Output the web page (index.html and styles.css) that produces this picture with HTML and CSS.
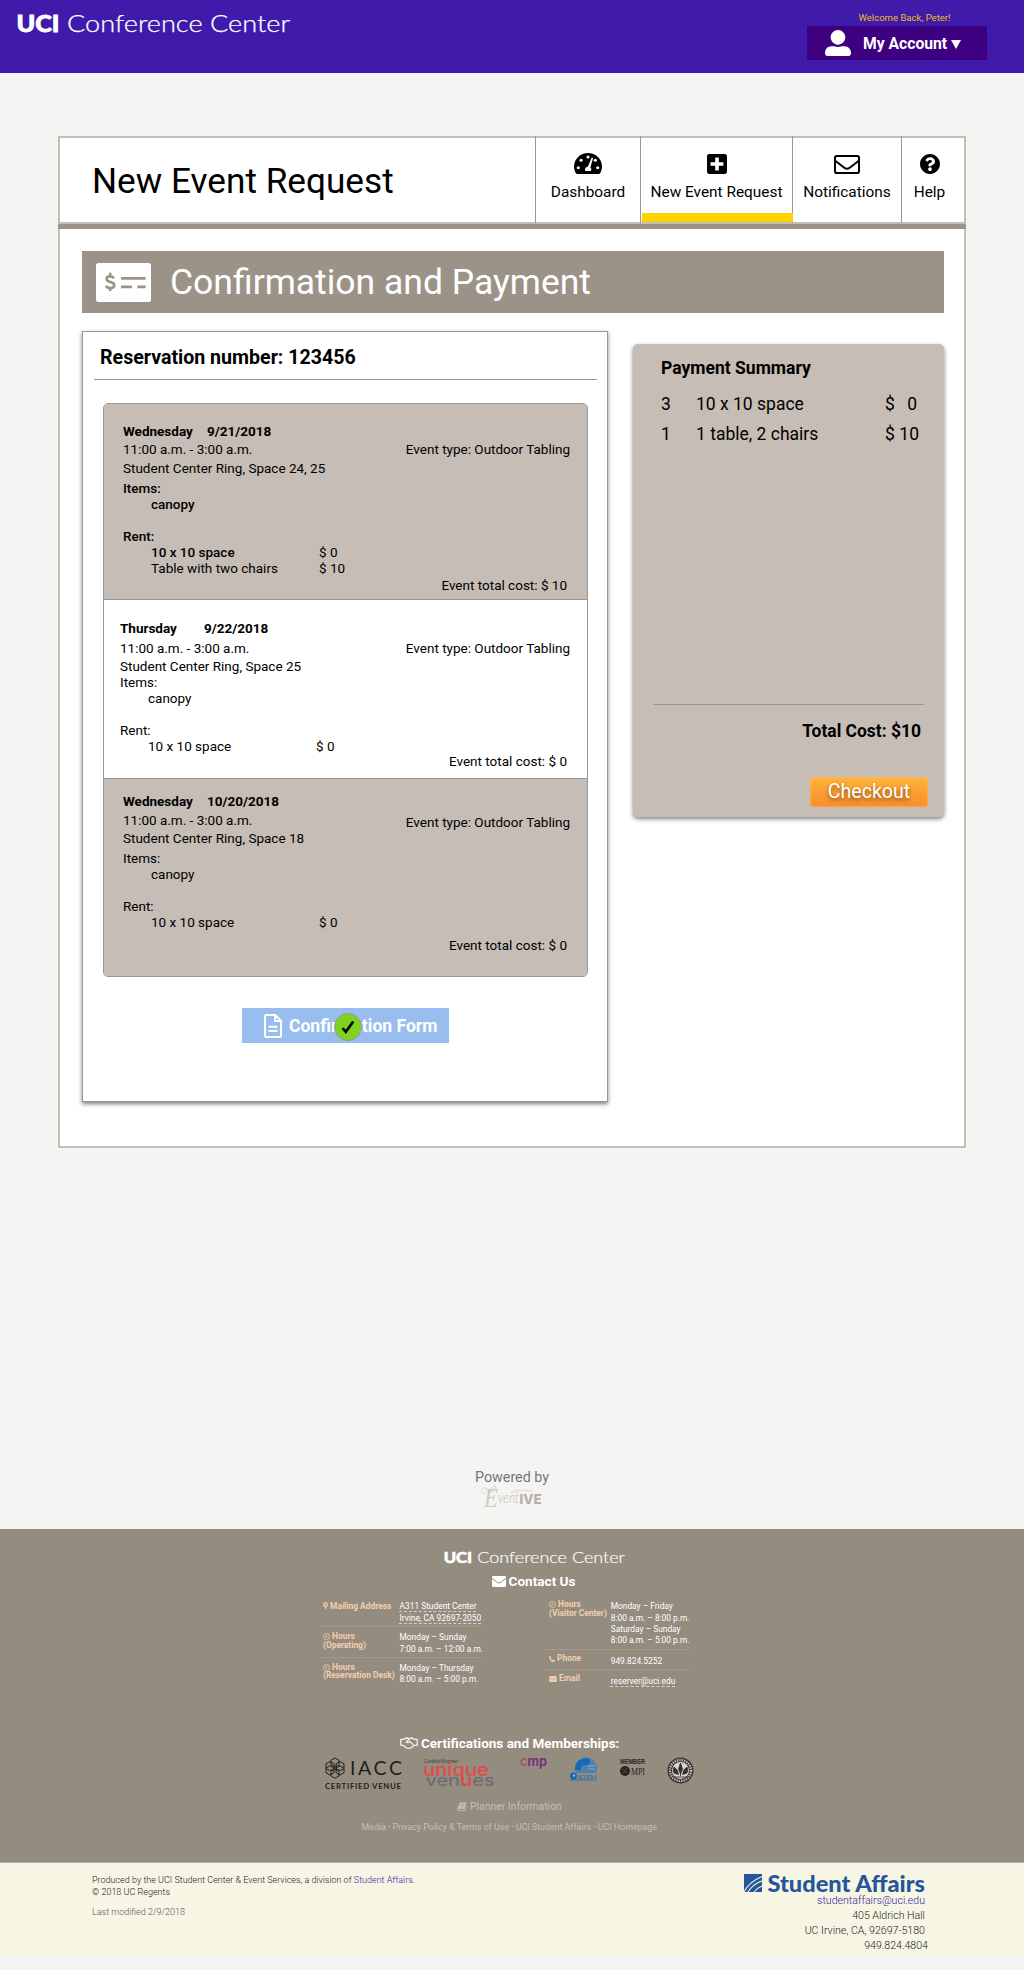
FILE: index.html
```html
<!DOCTYPE html>
<html lang="en">
<head>
<meta charset="utf-8">
<title>New Event Request – UCI Conference Center</title>
<link rel="stylesheet" href="styles.css">
</head>
<body>
<header class="topbar">
  <svg class="brand" viewBox="0 0 273 20" role="img" aria-label="UCI Conference Center">
    <text x="-.5" y="18" class="brand-uci" textLength="43" lengthAdjust="spacingAndGlyphs">UCI</text>
    <text x="50" y="18" class="brand-name" textLength="223" lengthAdjust="spacingAndGlyphs">Conference Center</text>
  </svg>
  <div class="account">
    <p class="welcome">Welcome Back, Peter!</p>
    <a class="account-menu">
      <svg class="account-icon" viewBox="0 0 512 512"><path fill="currentColor" d="M256 288c79.500 0 144-64.500 144-144S335.500 0 256 0 112 64.500 112 144s64.500 144 144 144zm128 32h-55.100c-22.200 10.200-46.900 16-72.900 16s-50.600-5.800-72.900-16H128C57.300 320 0 377.300 0 448v16c0 26.500 21.500 48 48 48h416c26.500 0 48-21.500 48-48v-16c0-70.700-57.300-128-128-128z"/></svg>
      <span>My Account</span>
      <svg class="caret" viewBox="0 0 10 9"><path fill="currentColor" d="M0 0h10L5 9z"/></svg>
    </a>
  </div>
</header>

<main class="panel">
  <div class="panel-head">
    <h1>New Event Request</h1>
    <nav class="tabs">
      <a class="tab tab-dashboard">
        <span class="tab-icon"><svg width="28" height="21" viewBox="0 32 576 448" preserveAspectRatio="none">
          <path d="M288 32C129 32 0 161 0 320c0 53 14 102 39 145 6 9 16 15 27 15h444c11 0 21-6 27-15 25-43 39-92 39-145C576 161 447 32 288 32z"/>
          <g fill="#fff"><circle cx="88" cy="345" r="32"/><circle cx="146" cy="187" r="32"/><circle cx="288" cy="118" r="32"/><circle cx="438" cy="187" r="32"/><circle cx="488" cy="345" r="32"/><path d="M364 128l30 10-58 202c24 18 26 48 12 76H232c-18-38 2-88 52-92z"/></g>
        </svg></span>
        <span>Dashboard</span>
      </a>
      <a class="tab tab-new is-active">
        <span class="tab-icon"><svg width="20" height="20" viewBox="0 32 448 448"><path d="M400 32H48C21.500 32 0 53.500 0 80v352c0 26.500 21.500 48 48 48h352c26.500 0 48-21.500 48-48V80c0-26.500-21.500-48-48-48zm-32 252c0 6.600-5.400 12-12 12h-92v92c0 6.600-5.400 12-12 12h-56c-6.600 0-12-5.400-12-12v-92H92c-6.600 0-12-5.400-12-12v-56c0-6.600 5.400-12 12-12h92v-92c0-6.600 5.400-12 12-12h56c6.600 0 12 5.400 12 12v92h92c6.600 0 12 5.400 12 12v56z"/></svg></span>
        <span>New Event Request</span>
      </a>
      <a class="tab tab-notes">
        <span class="tab-icon"><svg width="26" height="19" viewBox="0 0 26 19" fill="none" stroke="#000" stroke-width="2"><rect x="1" y="1" width="24" height="17" rx="1.800"/><path d="M1.500 6l8.800 6.700q2.700 2 5.400 0L24.500 6"/></svg></span>
        <span>Notifications</span>
      </a>
      <a class="tab tab-help">
        <span class="tab-icon"><svg width="20" height="20" viewBox="8 8 496 496"><path d="M504 256c0 136.997-111.043 248-248 248S8 392.997 8 256C8 119.083 119.043 8 256 8s248 111.083 248 248zM262.655 90c-54.497 0-89.255 22.957-116.549 63.758-3.536 5.286-2.353 12.415 2.715 16.258l34.699 26.310c5.205 3.947 12.621 3.008 16.665-2.122 17.864-22.658 30.113-35.797 57.303-35.797 20.429 0 45.698 13.148 45.698 32.958 0 14.976-12.363 22.667-32.534 33.976C247.128 238.528 216 254.941 216 296v4c0 6.627 5.373 12 12 12h56c6.627 0 12-5.373 12-12v-1.333c0-28.462 83.186-29.647 83.186-106.667 0-58.002-60.165-102-116.531-102zM256 338c-25.365 0-46 20.635-46 46 0 25.364 20.635 46 46 46s46-20.636 46-46c0-25.365-20.635-46-46-46z"/></svg></span>
        <span>Help</span>
      </a>
    </nav>
  </div>

  <div class="panel-body">
    <div class="banner">
      <svg width="55" height="39" viewBox="0 0 55 39">
        <rect width="55" height="39" rx="2.500" fill="#fff"/>
        <g fill="none" stroke="#9c9388" stroke-width="2.700"><path d="M18 15.200c-1-1.400-2.400-1.900-4-1.900-2.100 0-3.400 1.100-3.400 2.600 0 3.800 7.700 2.400 7.700 6.200 0 1.900-1.600 2.900-3.900 2.900-2 0-3.600-.6-4.500-2.200M14.200 9.800v3.500M14.200 25v3"/><path d="M25 15.300h24.600M25 23.800h11M41.400 23.800h8.200"/></g>
      </svg>
      <h2>Confirmation and Payment</h2>
    </div>

    <div class="columns">
      <section class="reservation">
        <h3>Reservation number: 123456</h3>
        <div class="events">
          <article class="event event-1">
            <div class="event-main">
              <p class="when"><b>Wednesday</b><b>9/21/2018</b></p>
              <p class="time">11:00 a.m. - 3:00 a.m.</p>
              <p class="place">Student Center Ring, Space 24, 25</p>
              <div class="lists">
                <p class="medium">Items:</p>
                <p class="entry medium">canopy</p>
                <p class="rent medium">Rent:</p>
                <p class="entry"><span class="medium">10 x 10 space</span><span>$ 0</span></p>
                <p class="entry"><span>Table with two chairs</span><span>$ 10</span></p>
              </div>
            </div>
            <div class="event-side">
              <p class="type">Event type: Outdoor Tabling</p>
              <p class="cost">Event total cost: $ 10</p>
            </div>
          </article>
          <article class="event event-2">
            <div class="event-main">
              <p class="when"><b>Thursday</b><b>9/22/2018</b></p>
              <p class="time">11:00 a.m. - 3:00 a.m.</p>
              <p class="place">Student Center Ring, Space 25</p>
              <div class="lists">
                <p>Items:</p>
                <p class="entry">canopy</p>
                <p class="rent">Rent:</p>
                <p class="entry"><span>10 x 10 space</span><span>$ 0</span></p>
              </div>
            </div>
            <div class="event-side">
              <p class="type">Event type: Outdoor Tabling</p>
              <p class="cost">Event total cost: $ 0</p>
            </div>
          </article>
          <article class="event event-3">
            <div class="event-main">
              <p class="when"><b>Wednesday</b><b>10/20/2018</b></p>
              <p class="time">11:00 a.m. - 3:00 a.m.</p>
              <p class="place">Student Center Ring, Space 18</p>
              <div class="lists">
                <p>Items:</p>
                <p class="entry">canopy</p>
                <p class="rent">Rent:</p>
                <p class="entry"><span>10 x 10 space</span><span>$ 0</span></p>
              </div>
            </div>
            <div class="event-side">
              <p class="type">Event type: Outdoor Tabling</p>
              <p class="cost">Event total cost: $ 0</p>
            </div>
          </article>
        </div>
        <a class="form-button">
          <svg width="18" height="24" viewBox="0 0 18 24" fill="none" stroke="#fff" stroke-width="2"><path d="M2.500 1h8.700L17 6.800v14.700q0 1.500-1.500 1.500h-13Q1 23 1 21.500v-19Q1 1 2.500 1zM11 1v6h6M4.500 12.700h9M4.500 17h9"/></svg>
          <span>Confirmation Form</span>
          <span class="done-badge"><svg width="14" height="14" viewBox="0 0 14 14"><path d="M1.500 8l3.300 3.800L12.300 1.500" fill="none" stroke="#000" stroke-width="2.600"/></svg></span>
        </a>
      </section>

      <aside class="summary">
        <h3>Payment Summary</h3>
        <div class="summary-row"><span>3</span><span>10 x 10 space</span><span>$</span><span class="amount amount-zero">0</span></div>
        <div class="summary-row"><span>1</span><span>1 table, 2 chairs</span><span>$</span><span class="amount">10</span></div>
        <p class="total">Total Cost: $10</p>
        <button class="checkout">Checkout</button>
      </aside>
    </div>
  </div>
</main>

<div class="powered">
  <p>Powered by</p>
  <svg width="62" height="26" viewBox="0 0 62 26" role="img" aria-label="Eventive">
    <text x="3" y="22" class="ev-cap" textLength="14" lengthAdjust="spacingAndGlyphs">E</text>
    <text x="17" y="18" class="ev-script" textLength="21" lengthAdjust="spacingAndGlyphs">vent</text>
    <text x="38.500" y="18.500" class="ev-bold" textLength="22" lengthAdjust="spacingAndGlyphs">IVE</text>
    <path d="M5 8C-1 10 0 2 4 3s3 5 7 4 5-8 2-6-1 6-4 6M30 8q6-4 13-3t8 1" fill="none" stroke="#cfc9c3" stroke-width=".7"/>
  </svg>
</div>

<footer class="footer">
  <svg class="brand" viewBox="0 0 273 20" role="img" aria-label="UCI Conference Center">
    <text x="-.5" y="18" class="brand-uci" textLength="43" lengthAdjust="spacingAndGlyphs">UCI</text>
    <text x="50" y="18" class="brand-name" textLength="223" lengthAdjust="spacingAndGlyphs">Conference Center</text>
  </svg>
  <h4 class="contact-title"><svg width="14" height="11" viewBox="0 0 14 11"><rect width="14" height="11" rx="1.200" fill="#fff"/><path d="M0 2.500l5.500 4q1.500 1.100 3 0l5.500-4" fill="none" stroke="#958c80"/></svg>Contact Us</h4>

  <div class="contacts">
    <div class="contact-table table-left">
      <dl>
        <dt class="one"><svg width="5" height="8" viewBox="0 0 5 8"><path d="M2.500 0a2.400 2.400 0 0 1 1 4.600L2.500 8l-1-3.400A2.400 2.400 0 0 1 2.500 0z" fill="currentColor"/><circle cx="2.500" cy="2.400" r="1.100" fill="#958c80"/></svg> Mailing Address</dt>
        <dd><u>A311 Student Center</u><br><u>Irvine, CA 92697-2050</u></dd>
      </dl>
      <dl>
        <dt><svg width="7" height="7" viewBox="0 0 7 7"><path d="M3.500.5a3 3 0 1 1 0 6 3 3 0 0 1 0-6zM3.600 1.800v2H2" fill="none" stroke="currentColor" stroke-width=".8"/></svg> Hours<br>(Operating)</dt>
        <dd>Monday – Sunday<br>7:00 a.m. – 12:00 a.m.</dd>
      </dl>
      <dl>
        <dt><svg width="7" height="7" viewBox="0 0 7 7"><path d="M3.500.5a3 3 0 1 1 0 6 3 3 0 0 1 0-6zM3.600 1.800v2H2" fill="none" stroke="currentColor" stroke-width=".8"/></svg> Hours<br>(Reservation Desk)</dt>
        <dd>Monday – Thursday<br>8:00 a.m. – 5:00 p.m.</dd>
      </dl>
    </div>
    <div class="contact-table table-right">
      <dl>
        <dt><svg width="7" height="7" viewBox="0 0 7 7"><path d="M3.500.5a3 3 0 1 1 0 6 3 3 0 0 1 0-6zM3.600 1.800v2H2" fill="none" stroke="currentColor" stroke-width=".8"/></svg> Hours<br>(Visitor Center)</dt>
        <dd>Monday – Friday<br>8:00 a.m. – 8:00 p.m.<br>Saturday – Sunday<br>8:00 a.m. – 5:00 p.m.</dd>
      </dl>
      <dl>
        <dt><svg width="6" height="6" viewBox="0 0 6 6"><path d="M0 .8L1.400 0l1 1.600-.7.800q.6 1.300 1.900 1.900l.8-.7L6 4.600 5.200 6Q.6 6 0 .8z" fill="currentColor"/></svg> Phone</dt>
        <dd>949.824.5252</dd>
      </dl>
      <dl>
        <dt><svg width="8" height="6" viewBox="0 0 14 11"><rect width="14" height="11" rx="1.200" fill="currentColor"/><path d="M0 2.500l5.500 4q1.500 1.100 3 0l5.500-4" fill="none" stroke="#958c80"/></svg> Email</dt>
        <dd><u>reserver@uci.edu</u></dd>
      </dl>
    </div>
  </div>

  <h4 class="cert-title"><svg width="18" height="12" viewBox="0 0 18 12" fill="none" stroke="#f4f1ec" stroke-width="1.300"><path d="M.8 2v6.500M17.200 2v6.500M.8 2.300h2.700L6.500.8 9 1.800 11.500.8l3 1.500h2.700M.8 8.300h2.500l3.200 2.700q2.500 1 5-.5l3-2.200h2.700M9.500 1.800L6.300 5q1.600 1.500 3.400-.6L13.500 8"/></svg>Certifications and Memberships:</h4>

  <div class="logos">
    <svg width="77" height="34" viewBox="0 0 77 34">
      <g fill="none" stroke="#211f1d"><path d="M10 1l4 2.300v4.600L10 10.200 6 7.900V3.300zM10 12l4 2.300v4.600l-4 2.300-4-2.300v-4.600zM5 4.500l4 2.300v4.600l-4 2.300-4-2.300V6.800zM15 4.500l4 2.300v4.600l-4 2.300-4-2.300V6.800zM5 8.800l4 2.300v4.600L5 18l-4-2.300v-4.600zM15 8.800l4 2.300v4.600L15 18l-4-2.300v-4.600z"/></g>
      <text x="25" y="18" font-family="Lato" font-size="19.500" fill="#211f1d" textLength="52">IACC</text>
      <text x="0" y="32" font-family="Lato" font-weight="700" font-size="7.800" fill="#211f1d" textLength="76">CERTIFIED VENUE</text>
    </svg>
    <svg width="72" height="34" viewBox="0 0 72 34">
      <text x="0" y="5.500" font-family="Liberation Sans" font-size="4.800" fill="#45423f" textLength="34">Certified Member</text>
      <text x="-1" y="18.500" font-family="Inter" font-size="17.500" font-weight="500" fill="#e4494a" textLength="66" lengthAdjust="spacingAndGlyphs">unique</text>
      <text x="1.500" y="29" font-family="Inter" font-size="16.500" fill="#6a6a71" textLength="69" lengthAdjust="spacingAndGlyphs">ven<tspan fill="#e4494a" font-weight="600">u</tspan>es</text>
    </svg>
    <svg width="29" height="34" viewBox="0 0 29 34">
      <text x="1" y="8.500" font-family="Inter" font-size="14" font-weight="600" fill="#792a7d" textLength="27" lengthAdjust="spacingAndGlyphs"><tspan fill="#b34a62">c</tspan>mp</text>
    </svg>
    <svg width="27" height="34" viewBox="0 0 27 34">
      <path d="M5 12A11 11 0 0 1 27 11l-1 5H6z" fill="#4c82b2"/><path d="M12 2q8-3 8 2t-6 4q-4 1-3 5H5Q4 5 12 2z" fill="#1768b6"/><path d="M18 12h7M17 9h8" stroke="#9aa9b0" stroke-width=".8"/>
      <circle cx="3.500" cy="19" r="3.500" fill="#1768b6"/><circle cx="4" cy="18.500" r="1.200" fill="#9fb0b8"/><path d="M0 23h26" stroke="#1768b6" stroke-width=".8"/>
      <text x="7.500" y="21.500" font-family="Liberation Serif" font-style="italic" font-weight="700" font-size="7" fill="#1768b6" textLength="19" lengthAdjust="spacingAndGlyphs">ACCED-I</text>
    </svg>
    <svg width="25" height="34" viewBox="0 0 25 34">
      <text x="0" y="7" font-family="Liberation Sans" font-weight="700" font-size="7.200" fill="#2a2624" textLength="25" lengthAdjust="spacingAndGlyphs">MEMBER</text>
      <circle cx="5" cy="14" r="5" fill="#282424"/><path d="M2 12l6 4M3 17l4-6" stroke="#5d5250" stroke-width=".7"/>
      <text x="11" y="18" font-family="Liberation Serif" font-size="9.500" fill="#2a2624" textLength="14" lengthAdjust="spacingAndGlyphs">MPI</text>
    </svg>
    <svg width="27" height="34" viewBox="0 0 27 34">
      <circle cx="13.500" cy="13.500" r="13" fill="#35322f"/><circle cx="13.500" cy="13.500" r="10.500" fill="none" stroke="#c9c5bf" stroke-width="2.400" stroke-dasharray="1.300 1.100"/><circle cx="13.500" cy="13.500" r="8.500" fill="#d9d6d1"/><path d="M13.500 19V6M9 17q-4-1-2-7 4 2 4.500 8M18 17q4-1 2-7-4 2-4.500 8M11.500 12l2-6 2 6-2 5zM6 20h15" fill="#35322f" stroke="#35322f" stroke-width=".9"/>
    </svg>
  </div>

  <p class="planner"><svg width="10" height="9" viewBox="0 0 10 9"><path d="M2.800.5H9.500L7.500 7H1.200Q1 8 2 8h6L9.800 2 9 8.800H1.500Q-.2 8.500.3 6.800z" fill="currentColor"/><path d="M4 2.500h3.500M3.500 4h3.500" stroke="#958c80" stroke-width=".6"/></svg>Planner Information</p>
  <p class="links"><a>Media</a> · <a>Privacy Policy &amp; Terms of Use</a> · <a>UCI Student Affairs</a> · <a>UCI Homepage</a></p>
</footer>

<div class="legal">
  <div class="credits">
    <p>Produced by the UCI Student Center &amp; Event Services, a division of <a>Student Affairs.</a></p>
    <p>© 2018 UC Regents</p>
    <p class="modified">Last modified 2/9/2018</p>
  </div>
  <address>
    <svg width="181" height="20" viewBox="0 0 181 20" role="img" aria-label="Student Affairs">
      <rect width="18" height="18" y="1" fill="#26559b"/><path d="M0 19Q5 9 18 3.500M4 19Q9 11 18 8M10 19q3-4 8-6" fill="none" stroke="#f7f6e4" stroke-width="1.100"/>
      <text x="23.500" y="18.500" font-family="Lato" font-weight="900" font-size="22" fill="#26559b" textLength="157.500" lengthAdjust="spacingAndGlyphs">Student Affairs</text>
    </svg>
    <a>studentaffairs@uci.edu</a>
    <span>405 Aldrich Hall</span>
    <span>UC Irvine, CA, 92697-5180</span>
    <span class="phone">949.824.4804</span>
  </address>
</div>
</body>
</html>
```
FILE: styles.css
```css
* { box-sizing: border-box; }
body, h1, h2, h3, h4, p, dl, dd { margin: 0; }
body {
  background: #f4f4f2;
  color: #000;
  font-family: Roboto, "Liberation Sans", sans-serif;
}
svg { display: block; flex: none; overflow: visible; }

/* Top bar */
.topbar {
  display: flex;
  justify-content: space-between;
  height: 73px;
  padding: 12px 37px 0 17px;
  background: #3f1aab;
}
.brand { width: 273px; height: 20px; margin-top: 2px; fill: #fff; font-family: Lato, sans-serif; }
.brand-uci { font-size: 23px; font-weight: 900; stroke: #fff; stroke-width: .8px; }
.brand-name { font-size: 23px; font-weight: 300; stroke: #fff; stroke-width: .25px; }
.account { width: 180px; }
.welcome {
  padding-left: 15px;
  color: #f0bd1a;
  font-size: 9.550px;
  line-height: 12px;
  text-align: center;
}
.account-menu {
  display: flex;
  align-items: center;
  height: 34px;
  margin-top: 2px;
  padding-left: 18px;
  background: #3c0080;
  color: #fff;
  font-size: 15.700px;
  font-weight: 700;
}
.account-icon { width: 26px; height: 26px; margin-right: 12px; }
.caret { width: 10px; height: 9px; margin: 3px 0 0 4px; }

/* Main panel */
.panel {
  width: 908px;
  height: 1012px;
  margin: 63px 0 0 58px;
  border: 2px solid #c5beb6;
  background: #fff;
}
.panel-head {
  display: flex;
  justify-content: space-between;
  height: 91px;
  margin: 0 -2px;
  padding: 0 2px;
  border-bottom: 5px solid #9c9287;
  box-shadow: inset 0 -2px #c5beb6;
}
.panel-head h1 {
  padding: 21px 0 0 32px;
  font-size: 35.200px;
  font-weight: 400;
  line-height: 44px;
}
.tabs { display: flex; height: 87px; margin-top: -2px; }
.tab {
  position: relative;
  display: flex;
  flex-direction: column;
  align-items: center;
  padding-top: 17px;
  border-left: 1px solid #979797;
  font-size: 15.400px;
  line-height: 20px;
}
.tab-icon { display: flex; align-items: flex-end; height: 21px; margin-bottom: 8px; }
.tab-dashboard { width: 105px; }
.tab-new { width: 152px; }
.tab-notes { width: 109px; }
.tab-help { width: 63px; padding-right: 7px; }
.tab.is-active::after {
  content: "";
  position: absolute;
  left: 1px;
  right: -1px;
  bottom: 1px;
  z-index: 1;
  height: 9px;
  background: #ffd200;
}
.panel-body { padding: 22px 20px 0 22px; }
.banner {
  display: flex;
  align-items: center;
  height: 62px;
  padding-left: 14px;
  background: #9c9388;
  color: #fff;
}
.banner h2 { margin-left: 19px; font-size: 35.500px; font-weight: 400; line-height: 42px; }
.columns { display: flex; align-items: flex-start; gap: 25px; margin-top: 18px; }

/* Reservation card */
.reservation {
  width: 526px;
  height: 771px;
  padding-top: 14px;
  border: 1px solid #979797;
  box-shadow: 0 2px 4px rgba(0, 0, 0, .5);
}
.reservation h3 {
  margin: 0 10px 0 11px;
  padding: 0 0 9px 6px;
  border-bottom: 1px solid #979797;
  font-size: 19.600px;
  line-height: 24px;
}
.events {
  width: 485px;
  margin: 23px 0 0 20px;
  overflow: hidden;
  border: 1px solid #979797;
  border-radius: 5px;
}
.event {
  display: flex;
  justify-content: space-between;
  background: #c5bdb6;
  font-size: 13.500px;
  line-height: 16px;
}
.event + .event { border-top: 1px solid #979797; }
.event-1 { height: 195px; padding: 19px 17px 0 19px; }
.event-2 { height: 179px; padding: 20px 17px 0 16px; background: #fff; }
.event-3 { height: 198px; padding: 14px 17px 0 19px; }
.when { display: flex; }
.when b:first-child { width: 84px; }
.medium { font-weight: 500; }
.entry { display: flex; padding-left: 28px; }
.entry span:first-child { width: 168px; }
.rent { margin-top: 16px; }
.event-side { text-align: right; }
.cost { padding-right: 3px; }
.event-1 .time { margin-top: 2px; }
.event-1 .place { margin-top: 3px; }
.event-1 .lists { margin-top: 4px; }
.event-1 .type { margin-top: 18px; }
.event-1 .cost { margin-top: 120px; }
.event-2 .time { margin-top: 4px; }
.event-2 .place { margin-top: 2px; }
.event-2 .type { margin-top: 20px; }
.event-2 .cost { margin-top: 97px; }
.event-3 .time { margin-top: 3px; }
.event-3 .place { margin-top: 2px; }
.event-3 .lists { margin-top: 4px; }
.event-3 .type { margin-top: 21px; }
.event-3 .cost { margin-top: 107px; }
.form-button {
  position: relative;
  display: flex;
  align-items: center;
  width: 207px;
  height: 35px;
  margin: 31px 0 0 159px;
  padding-left: 22px;
  background: #97beee;
  color: #fff;
  font-size: 17.550px;
  font-weight: 700;
}
.form-button > svg { margin-right: 7px; }
.done-badge {
  position: absolute;
  left: 92px;
  top: 5px;
  display: flex;
  align-items: center;
  justify-content: center;
  width: 28px;
  height: 28px;
  border: 1px solid #979797;
  border-radius: 50%;
  background: #7ed321;
}

/* Payment summary */
.summary {
  display: flex;
  flex-direction: column;
  width: 311px;
  height: 473px;
  margin-top: 13px;
  padding: 12px 16px 10px 20px;
  border-radius: 5px;
  background: #c5bdb6;
  box-shadow: 0 2px 4px rgba(0, 0, 0, .5);
  font-size: 17.500px;
}
.summary h3 { margin: 0 0 9px 8px; font-size: 17.550px; line-height: 24px; }
.summary-row {
  display: grid;
  grid-template-columns: 35px 189px 12px 22px;
  margin-left: 8px;
  line-height: 30px;
}
.amount { text-align: right; }
.amount-zero { padding-right: 2px; }
.total {
  margin: auto 4px 0 0;
  padding: 14px 3px 0 0;
  border-top: 1px solid #979797;
  font-size: 17.450px;
  font-weight: 700;
  line-height: 24px;
  text-align: right;
}
.checkout {
  align-self: flex-end;
  width: 118px;
  height: 30px;
  margin-top: 34px;
  padding: 0;
  border: 0;
  border-radius: 3px;
  background: linear-gradient(#ffb53c, #fb8a2a);
  box-shadow: inset 0 0 3px #ffc465;
  color: #fff;
  font: 400 19.600px/28px Roboto, sans-serif;
  text-shadow: 0 2px 4px rgba(0, 0, 0, .5);
}

/* Powered by */
.powered {
  display: flex;
  flex-direction: column;
  align-items: center;
  height: 381px;
  padding-top: 321px;
  color: #777;
  font-size: 14.300px;
  line-height: 16px;
}
.ev-cap { fill: #d0cac4; font: italic 27px "Liberation Serif"; }
.ev-script { fill: #c4bdb6; font: italic 300 16px Lato; }
.ev-bold { fill: #b9afa6; font: 800 13.500px Inter; }

/* Footer */
.footer {
  height: 334px;
  padding: 21px 330px 0 320px;
  border-bottom: 1px solid #b4ada2;
  background: #958c80;
  color: #fff;
}
.footer .brand { width: 181px; height: 13.300px; margin: 1px 0 0 124px; }
.footer h4 { display: flex; align-items: center; font-size: 13.600px; line-height: 16px; }
.contact-title { margin: 9px 0 0 171.500px; }
.contact-title svg { margin-right: 3px; }
.contacts { display: flex; justify-content: space-between; margin-top: 12px; padding-right: 4px; }
.contact-table { font-size: 8.400px; }
.table-left { width: 163px; }
.table-right { width: 145px; }
.contact-table dl { display: flex; }
.contact-table dl + dl { border-top: 1px solid #a89790; }
.contact-table dt { color: #f3cfae; font-weight: 700; line-height: 8.500px; white-space: nowrap; }
.contact-table dt svg { display: inline-block; vertical-align: -1px; }
.contact-table dd { line-height: 11.300px; white-space: nowrap; }
.contact-table u { text-decoration: underline dashed #d8d2ca .5px; text-underline-offset: 2px; }
.table-left dt { width: 79.500px; padding: 5px 0 0 3px; }
.table-left dl:first-child { height: 25px; }
.table-left dl:first-child dt { padding-top: 0; line-height: 11.300px; }
.table-left dl + dl { height: 30.500px; }
.table-left dl + dl dd { padding-top: 5px; }
.table-right dt { width: 65.700px; padding: 0 0 0 4px; }
.table-right dl:first-child { height: 47.500px; }
.table-right dl:first-child dt { margin-top: -1px; }
.table-right dl + dl { height: 20px; }
.table-right dl + dl dt { padding-top: 4px; }
.table-right dl + dl dd { padding-top: 6px; }
.footer .cert-title { margin: 46px 0 0 80px; font-size: 13.500px; white-space: nowrap; }
.cert-title svg { margin-right: 3px; }
.logos { display: flex; justify-content: space-between; width: 369px; height: 34px; margin: 6px 0 0 5px; }
.planner { display: flex; align-items: center; margin: 10px 0 0 137px; color: #cdbcad; font-size: 10.400px; line-height: 12px; }
.planner svg { margin-right: 3px; }
.links { margin: 8px 0 0 41.500px; font-size: 8.850px; line-height: 12px; white-space: nowrap; }
.links a { color: #cdbcad; }

/* Legal strip */
.legal {
  display: flex;
  justify-content: space-between;
  height: 93px;
  padding: 10px 99px 0 92px;
  background: #f7f6e4;
  color: #222;
  font-weight: 300;
}
.legal a { color: #3520a0; }
.credits { padding-top: 1px; font-size: 9px; line-height: 12px; }
.modified { margin-top: 8px; color: #555; }
address {
  display: flex;
  flex-direction: column;
  align-items: flex-end;
  font-size: 10.600px;
  font-style: normal;
  line-height: 15px;
}
address .phone { margin-right: -3px; }
```
